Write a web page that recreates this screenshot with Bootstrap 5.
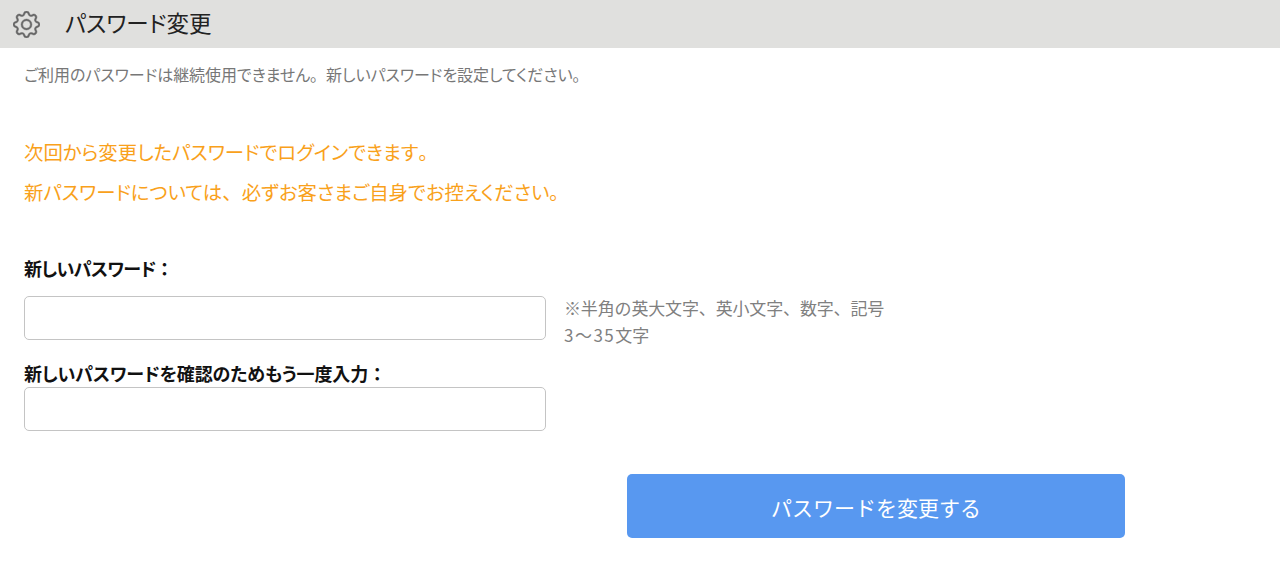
<!DOCTYPE html>
<html lang="ja">
<head>
    <meta charset="UTF-8">
    <title>パスワード変更</title>
    <link rel="stylesheet" href="https://cdn.jsdelivr.net/npm/bootstrap@5.3.0/dist/css/bootstrap.min.css">
    <style>
        body { font-family: "Noto Sans CJK JP", sans-serif; font-feature-settings: "palt"; background: #fff; }
        .full-punct { font-feature-settings: normal; }
        .page-head { height: 48px; background: #e0e0de; padding: 0 0 3px 13px; gap: 25px; }
        .page-head svg { width: 27px; height: 27px; color: #666; stroke: currentColor; stroke-width: .25; margin-top: 3px; }
        .page-head h1 { font-size: 22.5px; font-weight: 400; color: #222; margin: 0; }
        .page-body { padding: 0 24px; }
        .lead-note { font-size: 16px; line-height: 24px; color: #777; margin: 14px 0 0 0; letter-spacing: -.05px; }
        .notice-box { margin-top: 46px; font-size: 19.4px; line-height: 40px; color: #f9a11b; }
        .field-label { font-size: 18px; font-weight: 700; color: #111; line-height: 24px; margin: 0; letter-spacing: -.1px; }
        .label-first { margin-top: 44px; letter-spacing: -.6px; }
        .label-second { margin-top: 13px; margin-bottom: 2px; }
        .pw-row { margin-top: 14px; }
        .pw-input.form-control { width: 522px; height: 43.5px; border-color: #c4c4c4; border-radius: 5px; flex: none; }
        .pw-row .pw-input { margin-top: 2px; }
        .pw-hint { font-size: 17px; line-height: 27px; color: #808080; margin-left: 18px; font-feature-settings: normal; letter-spacing: -.15px; }
        .hint-digits { letter-spacing: 1.5px; }
        .submit-row { margin-top: 43.5px; padding-left: 603px; }
        .submit-btn.btn { width: 498px; height: 64px; background: #5898f0; border: 0; border-radius: 5px; color: #fff; font-size: 21px; padding: 4px 0 0; }
    </style>
</head>
<body>
    <div class="page-head d-flex align-items-center">
        <svg viewBox="0 0 16 16" fill="currentColor" aria-hidden="true">
            <path d="M8 4.754a3.246 3.246 0 1 0 0 6.492 3.246 3.246 0 0 0 0-6.492zM5.754 8a2.246 2.246 0 1 1 4.492 0 2.246 2.246 0 0 1-4.492 0z"/>
            <path d="M9.796 1.343c-.527-1.79-3.065-1.79-3.592 0l-.094.319a.873.873 0 0 1-1.255.52l-.292-.16c-1.64-.892-3.433.902-2.54 2.541l.159.292a.873.873 0 0 1-.52 1.255l-.319.094c-1.79.527-1.79 3.065 0 3.592l.319.094a.873.873 0 0 1 .52 1.255l-.16.292c-.892 1.64.901 3.434 2.541 2.54l.292-.159a.873.873 0 0 1 1.255.52l.094.319c.527 1.79 3.065 1.79 3.592 0l.094-.319a.873.873 0 0 1 1.255-.52l.292.16c1.64.893 3.434-.902 2.54-2.541l-.159-.292a.873.873 0 0 1 .52-1.255l.319-.094c1.79-.527 1.79-3.065 0-3.592l-.319-.094a.873.873 0 0 1-.52-1.255l.16-.292c.893-1.64-.902-3.433-2.541-2.54l-.292.159a.873.873 0 0 1-1.255-.52l-.094-.319zm-2.633.283c.246-.835 1.428-.835 1.674 0l.094.319a1.873 1.873 0 0 0 2.693 1.115l.291-.16c.764-.415 1.6.42 1.184 1.185l-.159.292a1.873 1.873 0 0 0 1.116 2.692l.318.094c.835.246.835 1.428 0 1.674l-.319.094a1.873 1.873 0 0 0-1.115 2.693l.16.291c.415.764-.42 1.6-1.185 1.184l-.291-.159a1.873 1.873 0 0 0-2.693 1.116l-.094.318c-.246.835-1.428.835-1.674 0l-.094-.319a1.873 1.873 0 0 0-2.692-1.115l-.292.16c-.764.415-1.6-.42-1.184-1.185l.159-.291A1.873 1.873 0 0 0 1.945 8.93l-.319-.094c-.835-.246-.835-1.428 0-1.674l.319-.094A1.873 1.873 0 0 0 3.06 4.377l-.16-.292c-.415-.764.42-1.6 1.185-1.184l.292.159a1.873 1.873 0 0 0 2.692-1.115l.094-.319z"/>
        </svg>
        <h1>パスワード変更</h1>
    </div>
    <form class="page-body">
        <p class="lead-note">ご利用のパスワードは継続使用できません<span class="full-punct">。</span>新しいパスワードを設定してください<span class="full-punct">。</span></p>
        <div class="notice-box">
            <div>次回から変更したパスワードでログインできます<span class="full-punct">。</span></div>
            <div>新パスワードについては<span class="full-punct">、</span>必ずお客さまご自身でお控えください<span class="full-punct">。</span></div>
        </div>
        <label class="field-label label-first d-block" for="newPassword">新しいパスワード<span class="full-punct">：</span></label>
        <div class="pw-row d-flex align-items-start">
            <input type="password" id="newPassword" class="form-control pw-input">
            <div class="pw-hint">※半角の英大文字、英小文字、数字、記号<br><span class="hint-digits">3～35</span>文字</div>
        </div>
        <label class="field-label label-second d-block" for="confirmPassword">新しいパスワードを確認のためもう一度入力<span class="full-punct">：</span></label>
        <input type="password" id="confirmPassword" class="form-control pw-input">
        <div class="submit-row">
            <button type="submit" class="btn submit-btn">パスワードを変更する</button>
        </div>
    </form>
    <script src="https://cdn.jsdelivr.net/npm/bootstrap@5.3.0/dist/js/bootstrap.bundle.min.js"></script>
</body>
</html>
